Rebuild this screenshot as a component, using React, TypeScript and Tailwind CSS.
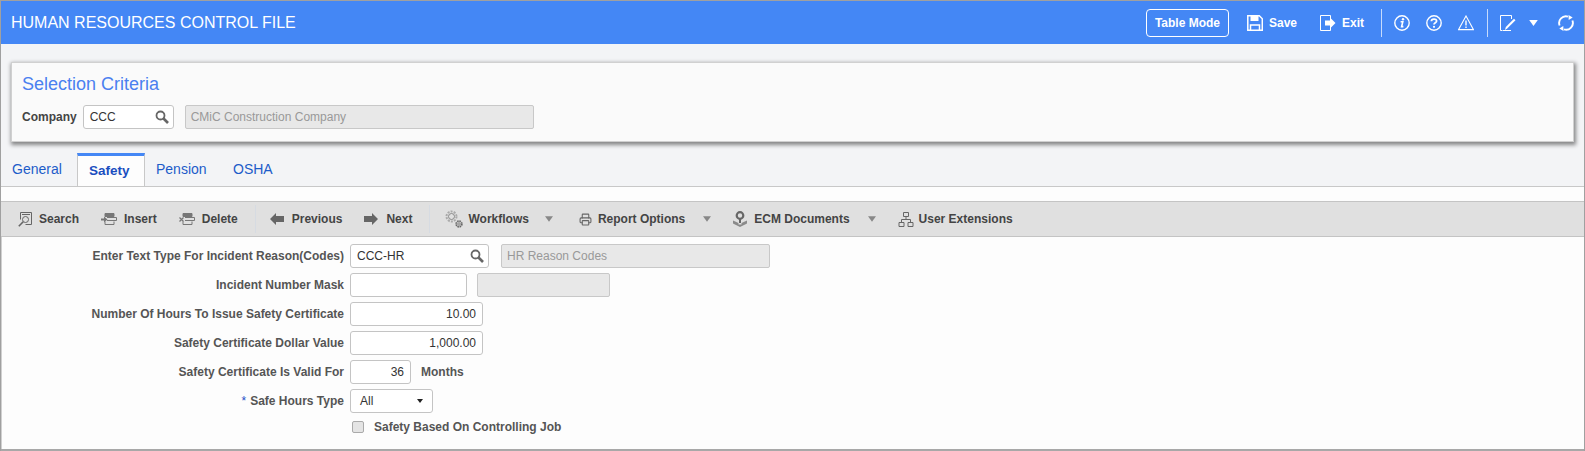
import { Printer } from "lucide-react";

const fields = "font-['Liberation_Sans',Arial,sans-serif]";

function Caret({ className }: { className?: string }) {
  return (
    <svg viewBox="0 0 10 7" className={className} fill="currentColor">
      <path d="M0 0h10L5 7z" />
    </svg>
  );
}

function TextBox({ className, value, right }: { className: string; value?: string; right?: boolean }) {
  return (
    <div
      className={`h-[24px] rounded-[3px] border border-[#c4c4c4] bg-white px-[6px] text-[12px] leading-[22px] text-[#333] ${right ? "text-right" : ""} ${className}`}
    >
      {value}
    </div>
  );
}

function ReadOnlyBox({ className, value }: { className: string; value?: string }) {
  return (
    <div
      className={`h-[24px] rounded-[2px] border border-[#c8c8c8] bg-[#e8e8e8] px-[5px] text-[12px] leading-[22px] text-[#999] ${className}`}
    >
      {value}
    </div>
  );
}

function LovBox({ className, value }: { className: string; value: string }) {
  return (
    <div className={`relative ${className}`}>
      <TextBox className="w-full" value={value} />
      <svg viewBox="0 0 14 14" className="absolute right-[5px] top-[5px] size-[14px] text-[#666]" fill="none" stroke="currentColor">
        <circle cx="5.5" cy="5.5" r="4" strokeWidth="1.8" />
        <path d="M8.5 8.5L13 13" strokeWidth="2.6" />
      </svg>
    </div>
  );
}

function ToolButton({ icon, label, className }: { icon: React.ReactNode; label: string; className?: string }) {
  return (
    <div className={`flex items-center text-[12px] font-bold text-[#444] ${className ?? ""}`}>
      {icon}
      <span>{label}</span>
    </div>
  );
}

function FormRow({ label, required, children }: { label: string; required?: boolean; children: React.ReactNode }) {
  return (
    <div className="flex h-[24px] items-center">
      <div className="w-[342px] text-right text-[12px] font-bold text-[#555]">
        {required && <span className="mr-[4px] font-normal text-[#2450c8]">*</span>}
        {label}
      </div>
      <div className="ml-[6px] flex items-center">{children}</div>
    </div>
  );
}

function RowIcon({ del }: { del?: boolean }) {
  return (
    <svg viewBox="0 0 16 14" className="mr-[7px] h-[14px] w-[16px] text-[#777]" fill="none" stroke="currentColor">
      <path d="M4 1.5h9v3H4z" fill="currentColor" />
      <path d="M6 5.5h9.5v3H6M4 9.5v3h9v-3" strokeWidth="1" />
      {del ? (
        <path d="M0.5 5.5l4 4m0-4l-4 4" strokeWidth="1.2" />
      ) : (
        <path d="M0 6.5h3V4.5l3.5 3L3 10.5V8.5H0z" fill="currentColor" stroke="none" />
      )}
    </svg>
  );
}

function GearsIcon() {
  return (
    <svg viewBox="0 0 18 18" className="mr-[5px] size-[18px]" fill="none">
      <circle cx="6.5" cy="6.5" r="5" stroke="#aaa" strokeWidth="2" strokeDasharray="2 1.15" />
      <circle cx="6.5" cy="6.5" r="3" stroke="#888" strokeWidth="1" />
      <circle cx="14" cy="14" r="2.8" stroke="#666" strokeWidth="1.8" strokeDasharray="1.5 0.7" />
      <circle cx="14" cy="14" r="1.2" stroke="#777" strokeWidth="0.8" />
    </svg>
  );
}

function EcmIcon() {
  return (
    <svg viewBox="0 0 14 16" className="mr-[7px] h-[16px] w-[14px] text-[#666]" fill="none">
      <circle cx="7" cy="4.5" r="3.3" stroke="currentColor" strokeWidth="2.2" />
      <path d="M6 8h2v4H6z" fill="currentColor" />
      <path d="M0 9.5L5.5 12v1.5h3V12L14 9.5v3L7 16 0 12.5z" fill="#8a8a8a" />
    </svg>
  );
}

function TreeIcon() {
  return (
    <svg viewBox="0 0 16 16" className="mr-[5px] size-[16px] text-[#666]" fill="none" stroke="currentColor">
      <path d="M5.5 1.5h5v4h-5zM1 11.5h5v4H1zM10 11.5h5v4h-5zM8 5.5v3M3.5 11.5v-3h9v3" />
    </svg>
  );
}

export default function App() {
  return (
    <div className={`flex h-[451px] w-[1585px] flex-col overflow-hidden border-t border-x border-[#a0a0a0] bg-[#fdfdfd] ${fields}`}>
      {/* title bar */}
      <div className="flex h-[43px] shrink-0 items-center justify-between bg-[#4487f5] pl-[10px] pr-[10px] text-white">
        <div className="text-[16px]">HUMAN RESOURCES CONTROL FILE</div>
        <div className="flex items-center">
          <div className="flex h-[28px] w-[83px] items-center justify-center rounded-[4px] border border-white text-[12px] font-bold">
            Table Mode
          </div>
          <div className="ml-[18px] flex items-center gap-[6px] text-[12px] font-bold">
            <svg viewBox="0 0 16 16" className="size-[16px]" fill="none" stroke="currentColor" strokeWidth="1.5">
              <path d="M.8.8h11.5l3 3v11.5H.8z" />
              <path d="M3.5 1v5h8V1" fill="currentColor" stroke="none" />
              <path d="M3.5 15V10h9v5" />
            </svg>
            Save
          </div>
          <div className="ml-[23px] flex items-center gap-[6px] text-[12px] font-bold">
            <svg viewBox="0 0 16 16" className="size-[16px]" fill="none" stroke="currentColor" strokeWidth="1">
              <path d="M10.5 4.5V.5h-10v15h10v-4" />
              <path d="M5 5.5h5V2.5L15.5 8 10 13.5v-3H5z" fill="currentColor" stroke="none" />
            </svg>
            Exit
          </div>
          <div className="ml-[17px] h-[28px] w-px bg-white/70" />
          <svg viewBox="0 0 16 16" className="ml-[12px] size-[16px]" fill="none" stroke="currentColor">
            <circle cx="8" cy="8" r="7.2" strokeWidth="1.4" />
            <path d="M6.6 6.8h2.2L7.6 11.6h1.8" strokeWidth="1.6" />
            <circle cx="9" cy="4.2" r="1.2" fill="currentColor" stroke="none" />
          </svg>
          <svg viewBox="0 0 16 16" className="ml-[16px] size-[16px]" fill="none" stroke="currentColor">
            <circle cx="8" cy="8" r="7.2" strokeWidth="1.4" />
            <path d="M5.4 6.2C5.4 3.6 10.6 3.4 10.6 6.1 10.6 7.8 8 7.8 8 9.6" strokeWidth="1.8" />
            <circle cx="8" cy="11.8" r="1.1" fill="currentColor" stroke="none" />
          </svg>
          <svg viewBox="0 0 16 16" className="ml-[16px] size-[16px]" fill="none" stroke="currentColor">
            <path d="M8 1L15.4 14.6H.6z" strokeWidth="1.1" />
            <path d="M8 5.5v5M8 11.5v1.6" strokeWidth="1.4" />
          </svg>
          <div className="ml-[13px] h-[28px] w-px bg-white/70" />
          <svg viewBox="0 0 16 16" className="ml-[12px] size-[16px]" fill="none" stroke="currentColor">
            <path d="M11.5 4V.5H.5v15h2" strokeWidth="1" />
            <path d="M5 15l.8-3L14 3.8 15.5 5.3 7.2 13.5z" fill="currentColor" stroke="none" />
            <path d="M3 15.5h8" strokeWidth="1" />
          </svg>
          <Caret className="ml-[13px] h-[6px] w-[9px]" />
          <svg viewBox="0 0 16 16" className="ml-[20px] size-[16px]" fill="none" stroke="currentColor">
            <path d="M1.6 10.5A6.8 6.8 0 0 1 10 1.6" strokeWidth="1.9" />
            <path d="M14.4 5.5A6.8 6.8 0 0 1 6 14.4" strokeWidth="1.9" />
            <path d="M10.5 0l4.2 2.6-4 2.4zM5.5 16l-4.2-2.6 4-2.4z" fill="currentColor" stroke="none" />
          </svg>
        </div>
      </div>

      {/* selection criteria */}
      <div className="shrink-0 bg-[#f3f4f6] pt-[18px]">
        <div className="ml-[10px] mr-[10px] h-[80px] border border-[#d0d0d0] bg-[#fafafa] pl-[10px] pt-[10px] shadow-[1px_2px_4px_1px_rgba(0,0,0,0.45)]">
          <div className="text-[18px] leading-[22px] text-[#4a80f0]">Selection Criteria</div>
          <div className="mt-[10px] flex items-center">
            <span className="text-[12px] font-bold text-[#444]">Company</span>
            <LovBox className="ml-[6px] w-[91px]" value="CCC" />
            <ReadOnlyBox className="ml-[11px] w-[349px]" value="CMiC Construction Company" />
          </div>
        </div>

        {/* tabs */}
        <div className="mt-[11px] flex h-[33px] text-[14px] text-[#1d5cc9]">
          <div className="flex w-[76px] items-center pl-[11px]">General</div>
          <div className="flex w-[68px] items-center border-x border-t-[3px] border-x-[#c8c8c8] border-t-[#4487f5] bg-[#fdfdfd] pl-[11px] text-[13.5px] font-bold text-[#1b4fc0]">
            Safety
          </div>
          <div className="flex w-[77px] items-center pl-[11px]">Pension</div>
          <div className="flex items-center pl-[11px]">OSHA</div>
        </div>
      </div>

      <div className="h-[15px] shrink-0 border-t border-[#c8c8c8] bg-[#fdfdfd]" />

      {/* toolbar */}
      <div className="flex h-[36px] shrink-0 items-center border-y border-[#c4c4c4] bg-[#e0e0e0] pl-[17px]">
        <ToolButton
          label="Search"
          icon={
            <svg viewBox="0 0 14 15" className="mr-[7px] h-[15px] w-[14px] text-[#666]" fill="none" stroke="currentColor">
              <path d="M2.5.5h11v12h-6M2.5.5v7" />
              <path d="M4 2.5h8" />
              <circle cx="7.5" cy="7.5" r="3" />
              <path d="M5.2 9.8L.8 14.2" strokeWidth="1.6" />
            </svg>
          }
        />
        <ToolButton className="ml-[22px]" label="Insert" icon={<RowIcon />} />
        <ToolButton className="ml-[22px]" label="Delete" icon={<RowIcon del />} />
        <div className="ml-[17px] h-[28px] w-px bg-[#d6dbe2]" />
        <ToolButton
          className="ml-[14px]"
          label="Previous"
          icon={
            <svg viewBox="0 0 14 12" className="mr-[8px] h-[12px] w-[14px] text-[#666]" fill="currentColor">
              <path d="M0 6l6-6v3h8v6H6v3z" />
            </svg>
          }
        />
        <ToolButton
          className="ml-[22px]"
          label="Next"
          icon={
            <svg viewBox="0 0 14 12" className="mr-[8px] h-[12px] w-[14px] text-[#666]" fill="currentColor">
              <path d="M14 6L8 0v3H0v6h8v3z" />
            </svg>
          }
        />
        <div className="ml-[17px] h-[28px] w-px bg-[#d6dbe2]" />
        <ToolButton className="ml-[15px]" label="Workflows" icon={<GearsIcon />} />
        <Caret className="ml-[16px] h-[6px] w-[8px] text-[#888]" />
        <ToolButton
          className="ml-[26px]"
          label="Report Options"
          icon={<Printer className="mr-[6px] size-[13px] text-[#666]" strokeWidth={2} />}
        />
        <Caret className="ml-[18px] h-[6px] w-[8px] text-[#888]" />
        <ToolButton className="ml-[22px]" label="ECM Documents" icon={<EcmIcon />} />
        <Caret className="ml-[18px] h-[6px] w-[8px] text-[#888]" />
        <ToolButton className="ml-[22px]" label="User Extensions" icon={<TreeIcon />} />
      </div>

      {/* form */}
      <div className="flex flex-1 flex-col gap-[5px] border-l border-[#d0d0d0] bg-[#fdfdfd] pt-[7px]">
        <FormRow label="Enter Text Type For Incident Reason(Codes)">
          <LovBox className="w-[139px]" value="CCC-HR" />
          <ReadOnlyBox className="ml-[12px] w-[269px]" value="HR Reason Codes" />
        </FormRow>
        <FormRow label="Incident Number Mask">
          <TextBox className="w-[117px]" />
          <ReadOnlyBox className="ml-[10px] w-[133px]" />
        </FormRow>
        <FormRow label="Number Of Hours To Issue Safety Certificate">
          <TextBox className="w-[133px]" value="10.00" right />
        </FormRow>
        <FormRow label="Safety Certificate Dollar Value">
          <TextBox className="w-[133px]" value="1,000.00" right />
        </FormRow>
        <FormRow label="Safety Certificate Is Valid For">
          <TextBox className="w-[61px]" value="36" right />
          <span className="ml-[10px] text-[12px] font-bold text-[#555]">Months</span>
        </FormRow>
        <FormRow label="Safe Hours Type" required>
          <div className="flex h-[24px] w-[83px] items-center justify-between rounded-[3px] border border-[#c4c4c4] bg-white px-[9px] text-[12px] text-[#333]">
            All
            <Caret className="h-[6px] w-[6px] text-[#222]" />
          </div>
        </FormRow>
        <div className="flex h-[18px] items-center pl-[350px]">
          <div className="size-[12px] rounded-[2px] border border-[#aaa] bg-[#e4e4e4]" />
          <span className="ml-[10px] text-[12px] font-bold text-[#555]">Safety Based On Controlling Job</span>
        </div>
      </div>

      <div className="h-[2px] shrink-0 bg-[#a8a8a8]" />
    </div>
  );
}
